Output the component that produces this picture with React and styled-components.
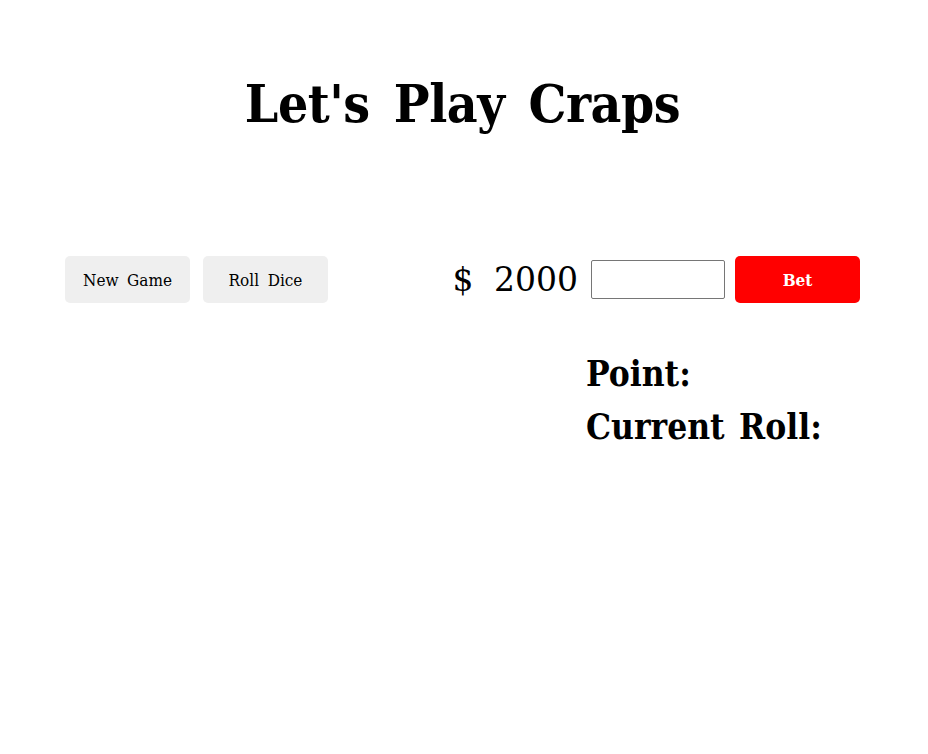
import styled, { createGlobalStyle } from "styled-components";

const GlobalStyle = createGlobalStyle`
  body {
    margin: 0;
    background: #fff;
    color: #000;
    font-family: "DejaVu Serif Condensed", "DejaVu Serif", serif;
    word-spacing: 0.22em;
  }
`;

const Page = styled.div`
  display: flex;
  flex-direction: column;
  padding: 71px 68px 0 65px;
`;

const Title = styled.h1`
  margin: 0;
  text-align: center;
  font-size: 53px;
  line-height: 64px;
  font-weight: bold;
  letter-spacing: -0.5px;
  word-spacing: 8px;
`;

const Controls = styled.div`
  display: flex;
  align-items: center;
  justify-content: space-between;
  margin-top: 121px;
`;

const Group = styled.div`
  display: flex;
  align-items: center;
  gap: ${(p) => p.$gap || "13px"};
`;

const Button = styled.button`
  width: 125px;
  height: 47px;
  border: none;
  border-radius: 5px;
  background: ${(p) => (p.$primary ? "#ff0000" : "#efefef")};
  color: ${(p) => (p.$primary ? "#fff" : "#000")};
  font-family: inherit;
  font-size: 17px;
  font-weight: ${(p) => (p.$primary ? "bold" : "normal")};
  word-spacing: 0.22em;
  cursor: pointer;
`;

const Bank = styled.span`
  font-family: "DejaVu Serif", serif;
  font-size: 33px;
  word-spacing: 10px;
  margin-right: 13px;
`;

const BetInput = styled.input`
  box-sizing: border-box;
  width: 134px;
  height: 39px;
  border: 1px solid #767676;
  border-radius: 2px;
  margin-right: 10px;
  padding: 0 6px;
  font-size: 16px;
`;

const Status = styled.div`
  display: flex;
  flex-direction: column;
  align-self: flex-end;
  width: 274px;
  margin-top: 44px;
  font-size: 35px;
  line-height: 53px;
  font-weight: bold;
`;

export default function App() {
  return (
    <Page>
      <GlobalStyle />
      <Title>Let's Play Craps</Title>
      <Controls>
        <Group>
          <Button>New Game</Button>
          <Button>Roll Dice</Button>
        </Group>
        <Group $gap="0">
          <Bank>$ 2000</Bank>
          <BetInput type="number" />
          <Button $primary>Bet</Button>
        </Group>
      </Controls>
      <Status>
        <div>Point:</div>
        <div>Current Roll:</div>
      </Status>
    </Page>
  );
}
